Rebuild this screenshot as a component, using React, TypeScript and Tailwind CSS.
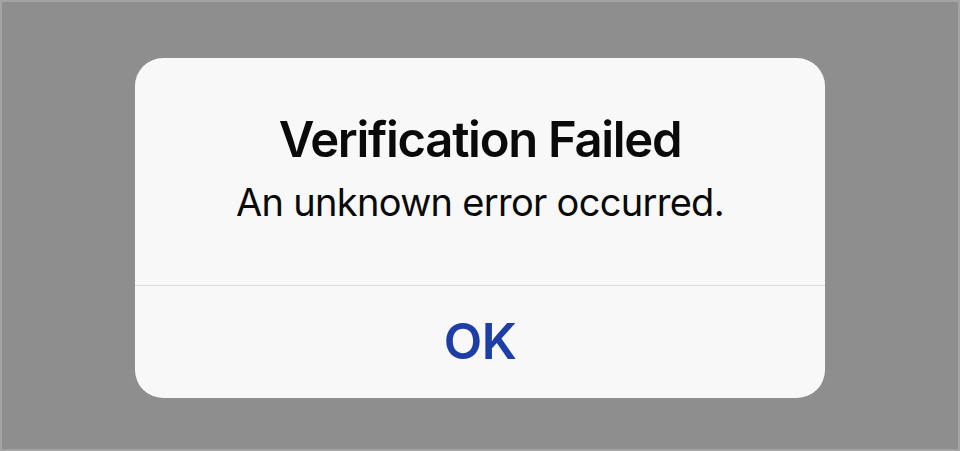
const App = () => {
  return (
    <div className="w-[960px] h-[451px] bg-[#8e8e8e] border-2 border-[#a3a3a3] flex items-center justify-center font-['Inter',sans-serif]">
      <div className="w-[690px] h-[340px] bg-[#f8f8f8] rounded-[28px] flex flex-col mt-[4px]">
        <div className="h-[227px] flex flex-col items-center pt-[52px]">
          <h1 className="text-[49px] leading-[60px] font-semibold text-[#0a0a0a] tracking-[-1.3px]">
            Verification Failed
          </h1>
          <p className="text-[38px] leading-[46px] text-[#0a0a0a] mt-[9px] tracking-[-0.7px]">
            An unknown error occurred.
          </p>
        </div>
        <div className="h-px bg-[#dcdcdc]" />
        <button className="flex-1 flex items-center justify-center text-[50px] font-semibold text-[#1c3ea6] tracking-[-0.5px]">
          OK
        </button>
      </div>
    </div>
  );
};

export default App;
